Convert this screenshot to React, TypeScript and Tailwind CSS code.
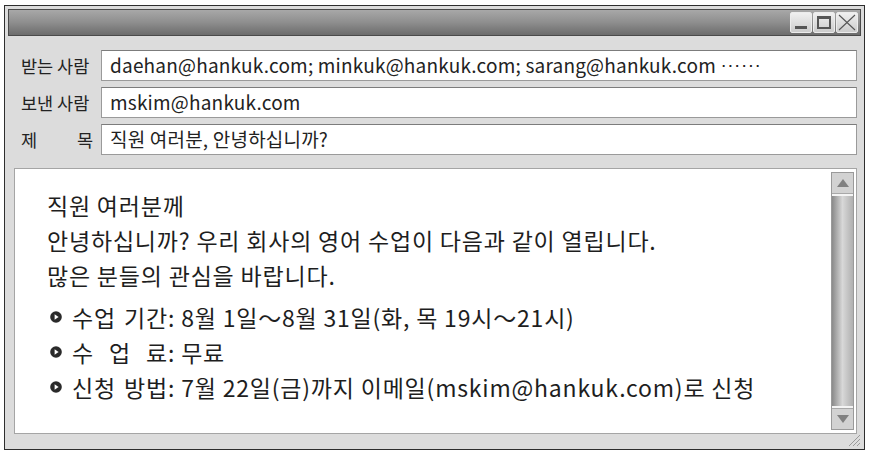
import React from "react";

const font = { fontFamily: '"Noto Sans CJK KR", "Noto Sans", sans-serif' };

function Bullet() {
  return (
    <svg width="12" height="12" viewBox="0 0 12 12" className="shrink-0">
      <circle cx="6" cy="6" r="5.8" fill="#2a2a2a" />
      <path d="M4.6 3.2 L8.6 6 L4.6 8.8 Z" fill="#ffffff" />
    </svg>
  );
}

function Field({ label, children }: { label: React.ReactNode; children: React.ReactNode }) {
  return (
    <div className="flex items-center h-[31px]">
      <div className="w-[93px] shrink-0 pl-[13px] pr-[8px] text-[17.5px] text-[#222] leading-none whitespace-nowrap">{label}</div>
      <div className="flex-1 h-[31px] bg-white border border-[#9a9a9a] border-t-[#7c7c7c] flex items-center pl-[8px] text-[19px] tracking-[0.2px] text-[#222] whitespace-nowrap overflow-hidden">
        {children}
      </div>
    </div>
  );
}

function Item({ parts, value }: { parts: string[]; value: string }) {
  return (
    <div className="flex items-center h-[35px]">
      <div className="ml-[3px] w-[22px] flex items-center"><Bullet /></div>
      <div className="w-[96px] flex justify-between">
        {parts.map((p, i) => (
          <span key={i}>{p}</span>
        ))}
      </div>
      <span>:&nbsp;{value}</span>
    </div>
  );
}

export default function App() {
  return (
    <div className="w-[869px] h-[457px] bg-white pt-[5px] pl-[4px]" style={font}>
      <div className="w-[861px] h-[445px] border border-[#2e2e2e] bg-[#dcdcdc] p-[3px] flex flex-col">
        {/* title bar */}
        <div className="h-[27px] border border-[#4a4a4a] bg-gradient-to-b from-[#a8a8a8] via-[#8e8e8e] to-[#6c6c6c] flex items-center justify-end pr-[2px] gap-[1px]">
          <div className="w-[22px] h-[21px] border border-[#ececec] rounded-[2px] bg-gradient-to-b from-[#f0f0f0] to-[#cccccc] flex items-end justify-center pb-[3px]">
            <div className="w-[12px] h-[3px] bg-[#555]" />
          </div>
          <div className="w-[22px] h-[21px] border border-[#ececec] rounded-[2px] bg-gradient-to-b from-[#f0f0f0] to-[#cccccc] flex items-center justify-center">
            <div className="w-[14px] h-[13px] border-[2px] border-t-[3px] border-[#555]" />
          </div>
          <div className="w-[22px] h-[21px] border border-[#ececec] rounded-[2px] bg-gradient-to-b from-[#f0f0f0] to-[#cccccc] flex items-center justify-center">
            <svg width="18" height="17" viewBox="0 0 18 17">
              <path d="M1 1 L17 16 M17 1 L1 16" stroke="#555" strokeWidth="1.1" />
            </svg>
          </div>
        </div>

        {/* header fields */}
        <div className="flex flex-col gap-[6px] pt-[14px] pr-[4px]">
          <Field label="받는 사람">
            daehan@hankuk.com; minkuk@hankuk.com; sarang@hankuk.com&nbsp;
            <span className="tracking-[0.5px]" style={{ fontFamily: '"Liberation Sans", sans-serif' }}>
              ······
            </span>
          </Field>
          <Field label="보낸 사람">mskim@hankuk.com</Field>
          <Field
            label={
              <span className="flex justify-between">
                <span>제</span>
                <span>목</span>
              </span>
            }
          >
            직원 여러분, 안녕하십니까?
          </Field>
        </div>

        {/* body */}
        <div className="mt-[13px] ml-[6px] mr-[4px] h-[268px] border border-[#a5a5a5] bg-white flex relative">
          <div className="flex-1 pl-[32px] pt-[19px] text-[23px] tracking-[0.8px] text-[#1e1e1e] leading-[35px] whitespace-nowrap">
            <div>직원 여러분께</div>
            <div>안녕하십니까? 우리 회사의 영어 수업이 다음과 같이 열립니다.</div>
            <div>많은 분들의 관심을 바랍니다.</div>
            <div className="h-[7px]" />
            <Item parts={["수업", "기간"]} value="8월 1일～8월 31일(화, 목 19시～21시)" />
            <Item parts={["수", "업", "료"]} value="무료" />
            <Item parts={["신청", "방법"]} value="7월 22일(금)까지 이메일(mskim@hankuk.com)로 신청" />
          </div>
          {/* scrollbar */}
          <div className="w-[23px] mr-[2px] my-[3px] flex flex-col border border-[#9a9a9a] bg-[#d0d0d0]">
            <div className="h-[21px] bg-[#d2d2d2] flex items-center justify-center border-b border-[#a8a8a8]">
              <svg width="12" height="8" viewBox="0 0 12 8"><path d="M6 0 L12 8 L0 8 Z" fill="#808080" /></svg>
            </div>
            <div className="flex-1 border-y-[2px] border-[#f4f4f4] bg-gradient-to-r from-[#8a8a8a] via-[#d8d8d8] to-[#b0b0b0]" />
            <div className="h-[21px] bg-[#d2d2d2] flex items-center justify-center border-t border-[#a8a8a8]">
              <svg width="12" height="8" viewBox="0 0 12 8"><path d="M0 0 L12 0 L6 8 Z" fill="#808080" /></svg>
            </div>
          </div>
        </div>

        {/* resize grip */}
        <div className="flex-1 flex justify-end items-end">
          <svg width="14" height="12" viewBox="0 0 14 12">
            <path d="M13 1 L2 12 M13 5 L6 12 M13 9 L10 12" stroke="#9a9a9a" strokeWidth="1" />
          </svg>
        </div>
      </div>
    </div>
  );
}
